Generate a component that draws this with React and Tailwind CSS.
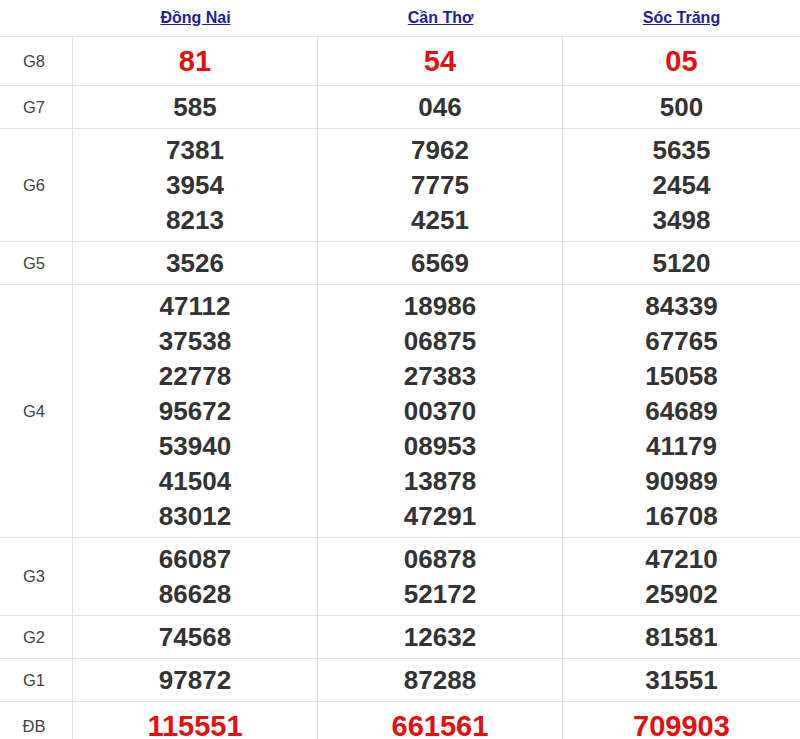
const provinces = ["Đồng Nai", "Cần Thơ", "Sóc Trăng"];

const rows = [
  { label: "G8", red: true, values: [["81"], ["54"], ["05"]] },
  { label: "G7", values: [["585"], ["046"], ["500"]] },
  {
    label: "G6",
    values: [
      ["7381", "3954", "8213"],
      ["7962", "7775", "4251"],
      ["5635", "2454", "3498"],
    ],
  },
  { label: "G5", values: [["3526"], ["6569"], ["5120"]] },
  {
    label: "G4",
    values: [
      ["47112", "37538", "22778", "95672", "53940", "41504", "83012"],
      ["18986", "06875", "27383", "00370", "08953", "13878", "47291"],
      ["84339", "67765", "15058", "64689", "41179", "90989", "16708"],
    ],
  },
  {
    label: "G3",
    values: [
      ["66087", "86628"],
      ["06878", "52172"],
      ["47210", "25902"],
    ],
  },
  { label: "G2", values: [["74568"], ["12632"], ["81581"]] },
  { label: "G1", values: [["97872"], ["87288"], ["31551"]] },
  { label: "ĐB", red: true, values: [["115551"], ["661561"], ["709903"]] },
];

export default function App() {
  return (
    <div
      className="w-[800px] h-[739px] overflow-hidden bg-white"
      style={{ fontFamily: '"Liberation Sans", Arial, sans-serif' }}
    >
      <div className="grid grid-cols-[73px_245px_245px_1fr]">
        <div className="h-[37px] border-b border-[#e4e4e4]" />
        {provinces.map((p) => (
          <div
            key={p}
            className="h-[37px] border-b border-[#e4e4e4] flex items-center justify-center"
          >
            <a className="text-[16px] font-bold text-[#21219c] underline">{p}</a>
          </div>
        ))}

        {rows.map((row) => (
          <Row key={row.label} row={row} />
        ))}
      </div>
    </div>
  );
}

function Row({ row }) {
  return (
    <>
      <div className="border-b border-r border-[#e4e4e4] flex items-center justify-center pr-[4px] text-[16.5px] text-[#444]">
        {row.label}
      </div>
      {row.values.map((nums, i) => (
        <div
          key={i}
          className={
            "border-b border-[#e4e4e4] pt-1 pb-[3px] flex flex-col items-center " +
            (i < 2 ? "border-r" : "")
          }
        >
          {nums.map((n) => (
            <span
              key={n}
              className={
                row.red
                  ? "text-[29px] leading-[41px] font-bold text-[#e41010]"
                  : "text-[26px] leading-[35px] font-bold text-[#333]"
              }
            >
              {n}
            </span>
          ))}
        </div>
      ))}
    </>
  );
}
